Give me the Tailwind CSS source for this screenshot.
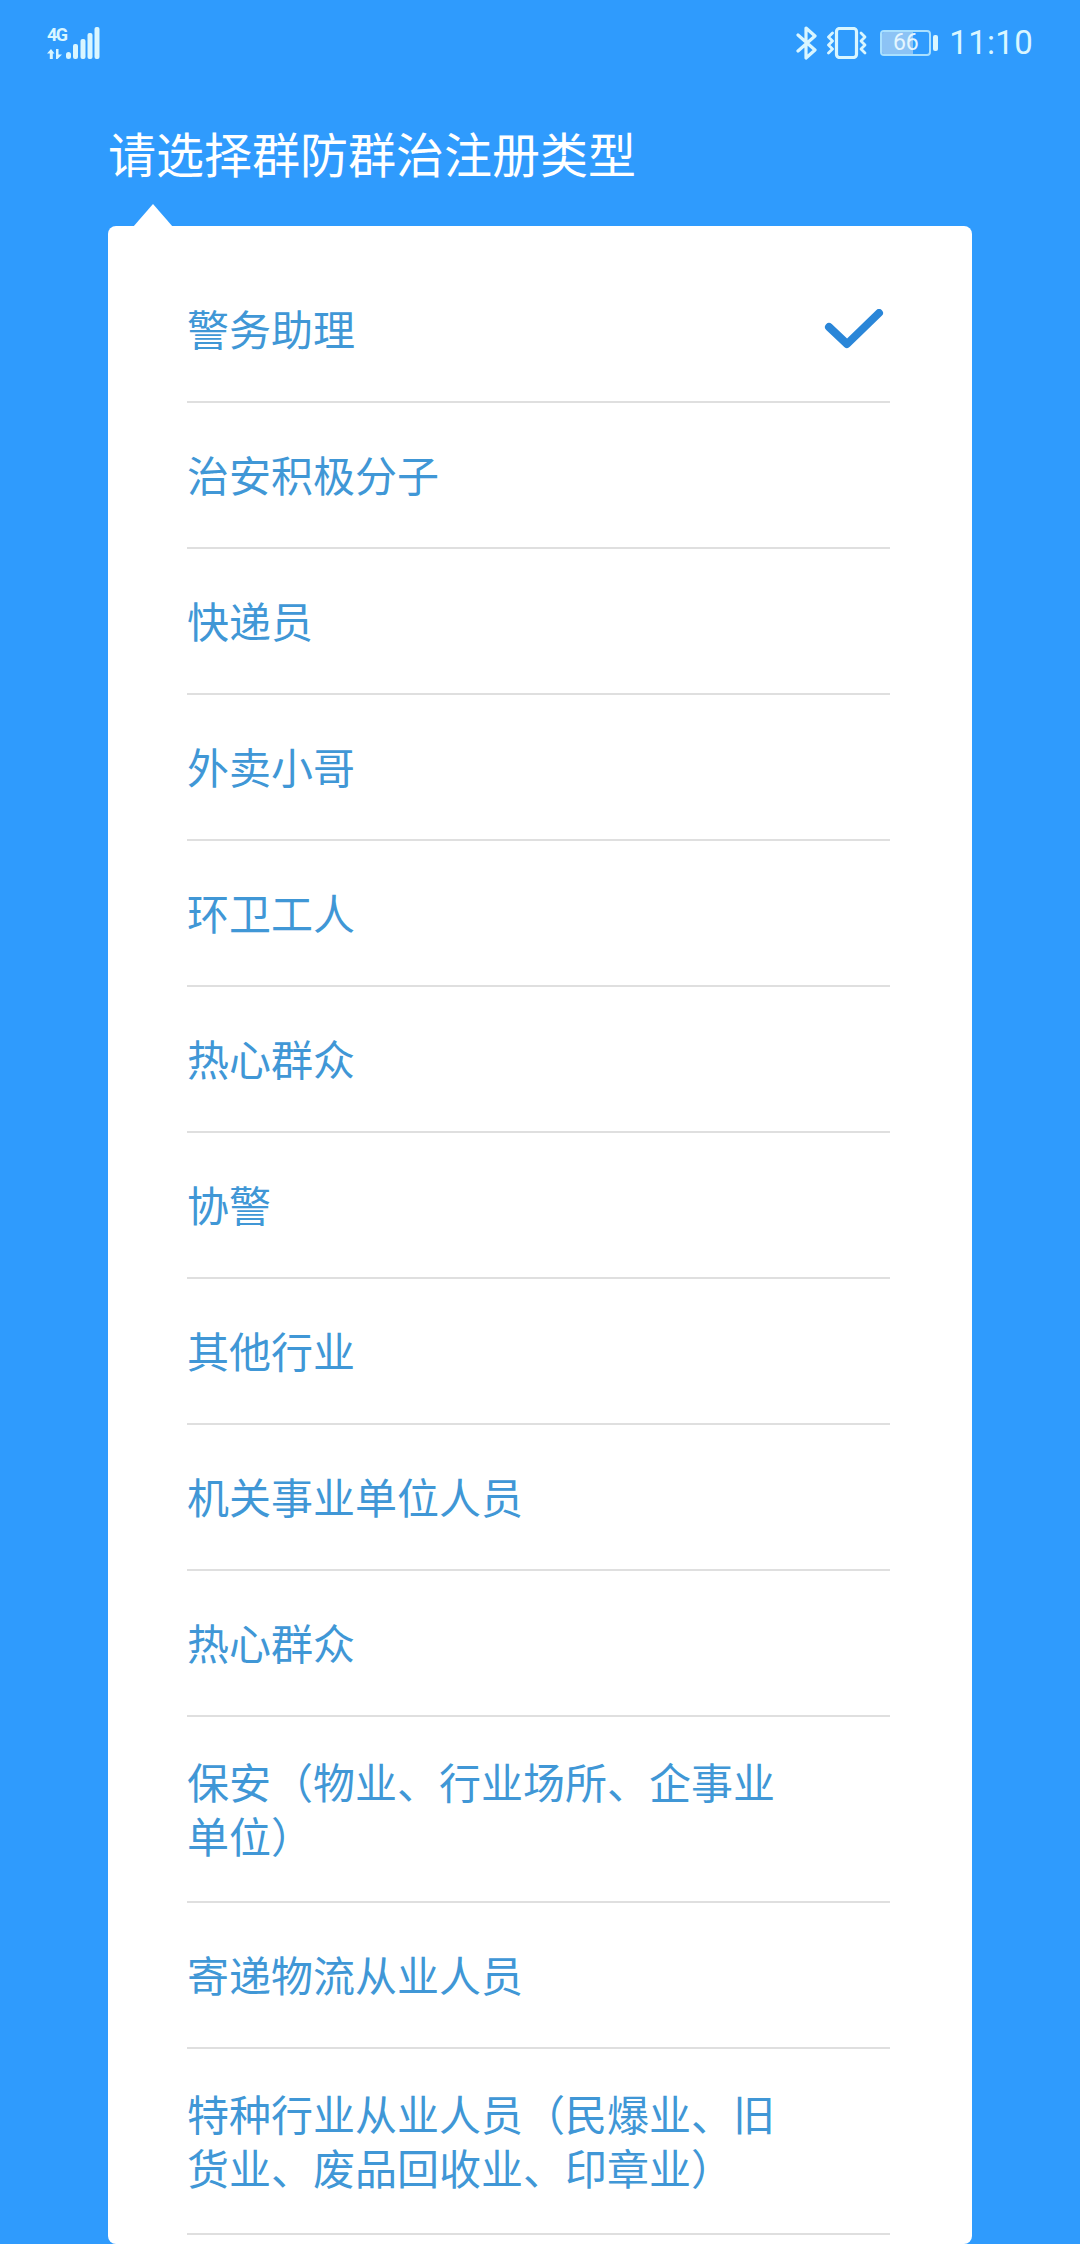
<!DOCTYPE html>
<html lang="zh-CN">
<head>
  <meta charset="UTF-8">
  <title>注册类型</title>
  <script src="https://cdn.jsdelivr.net/npm/@tailwindcss/browser@4"></script>
</head>
<body class="bg-[#2f9bfd]">
  <main class="h-[2244px] overflow-hidden flex flex-col font-['Roboto','Noto_Sans_CJK_SC',sans-serif]">
    <!-- status bar -->
    <header class="h-[84px] flex items-center justify-between pl-[47px] pr-[47px] pt-[1px] text-[#d9f6ff]">
      <div class="flex items-end gap-[1px] h-[32px]">
        <div class="flex flex-col justify-between h-[32px] w-[18px]">
          <span class="text-[18px] leading-[16px] font-bold tracking-[-1.6px]">4G</span>
          <svg width="18" height="10" viewBox="0 0 18 10" fill="#d9f6ff"><path d="M4 0 L7.5 4.5 H5.8 V10 H2.8 V4.5 H0 Z"/><path d="M9 0 H11.5 V5.5 H15 L10.5 10 H9 Z"/></svg>
        </div>
        <svg width="34" height="32" viewBox="0 0 34 32" fill="#d9f6ff">
          <rect x="0" y="25" width="5" height="7" rx="2.5"/>
          <rect x="7" y="17" width="5" height="15" rx="2"/>
          <rect x="14.5" y="12" width="5" height="20" rx="2"/>
          <rect x="21.5" y="6" width="5" height="26" rx="2"/>
          <rect x="28.5" y="0" width="5" height="32" rx="2"/>
        </svg>
      </div>
      <div class="flex items-center">
        <svg width="22" height="34" viewBox="0 0 22 34" fill="none" stroke="#d9f6ff" stroke-width="3.2" stroke-linejoin="round" stroke-linecap="round"><path d="M2 9 L19 24 L10 32 V2 L19 10 L2 25"/></svg>
        <svg class="ml-[9px]" width="40" height="32" viewBox="0 0 40 32" fill="none" stroke="#d9f6ff" stroke-linecap="round" stroke-linejoin="round">
          <rect x="9.5" y="1.5" width="20" height="29" rx="3" stroke-width="3.2"/>
          <path d="M5.5 6 L1.5 10 L5.5 14 L1.5 18 L5.5 22 L1.5 26" stroke-width="2.8"/>
          <path d="M34 6 L38 10 L34 14 L38 18 L34 22 L38 26" stroke-width="2.8"/>
        </svg>
        <div class="ml-[13px] flex items-center gap-[2px]">
          <div class="relative w-[51px] h-[26px] rounded-[4px] border-2 border-[#a9e0ff] flex items-center justify-center overflow-hidden">
            <div class="absolute left-0 top-0 bottom-0 w-[66%] bg-[#8cc3f5]"></div>
            <span class="relative text-[23px] leading-none text-[#e4f6ff]">66</span>
          </div>
          <div class="w-[5px] h-[16px] rounded-[2px] bg-[#d9f6ff]"></div>
        </div>
        <span class="ml-[11px] text-[33px] leading-none font-normal tracking-[0.3px]">11:10</span>
      </div>
    </header>

    <h1 class="mt-[41px] pl-[108px] text-[48px] leading-[64px] text-white font-normal">请选择群防群治注册类型</h1>

    <section class="relative mt-[37px] mx-[108px] flex-1 bg-white rounded-[8px] pt-[31px] pl-[79px] pr-[82px]">
      <!-- caret -->
      <div class="absolute left-[25px] top-[-22px] w-0 h-0 border-l-[20px] border-r-[20px] border-b-[23px] border-l-transparent border-r-transparent border-b-white"></div>

      <ul class="text-[42px] leading-[54px] text-[#4097d6]">
        <li class="min-h-[146px] pt-[6px] flex items-center justify-between border-b-2 border-[#dfdfdf]">
          <span>警务助理</span>
          <svg class="mr-[6px] mb-[7px]" width="60" height="40" viewBox="0 0 60 40" fill="none" stroke="#2a86d8" stroke-width="8" stroke-linecap="round" stroke-linejoin="round"><path d="M5 18 L23 35 L55 4"/></svg>
        </li>
        <li class="min-h-[146px] pt-[6px] flex items-center border-b-2 border-[#dfdfdf]">治安积极分子</li>
        <li class="min-h-[146px] pt-[6px] flex items-center border-b-2 border-[#dfdfdf]">快递员</li>
        <li class="min-h-[146px] pt-[6px] flex items-center border-b-2 border-[#dfdfdf]">外卖小哥</li>
        <li class="min-h-[146px] pt-[6px] flex items-center border-b-2 border-[#dfdfdf]">环卫工人</li>
        <li class="min-h-[146px] pt-[6px] flex items-center border-b-2 border-[#dfdfdf]">热心群众</li>
        <li class="min-h-[146px] pt-[6px] flex items-center border-b-2 border-[#dfdfdf]">协警</li>
        <li class="min-h-[146px] pt-[6px] flex items-center border-b-2 border-[#dfdfdf]">其他行业</li>
        <li class="min-h-[146px] pt-[6px] flex items-center border-b-2 border-[#dfdfdf]">机关事业单位人员</li>
        <li class="min-h-[146px] pt-[6px] flex items-center border-b-2 border-[#dfdfdf]">热心群众</li>
        <li class="min-h-[186px] pt-[6px] flex items-center border-b-2 border-[#dfdfdf]"><span class="max-w-[600px]">保安（物业、行业场所、企事业单位）</span></li>
        <li class="min-h-[146px] pt-[6px] flex items-center border-b-2 border-[#dfdfdf]">寄递物流从业人员</li>
        <li class="min-h-[186px] pt-[6px] flex items-center border-b-2 border-[#dfdfdf]"><span class="max-w-[600px]">特种行业从业人员（民爆业、旧货业、废品回收业、印章业）</span></li>
      </ul>
    </section>
  </main>
</body>
</html>
